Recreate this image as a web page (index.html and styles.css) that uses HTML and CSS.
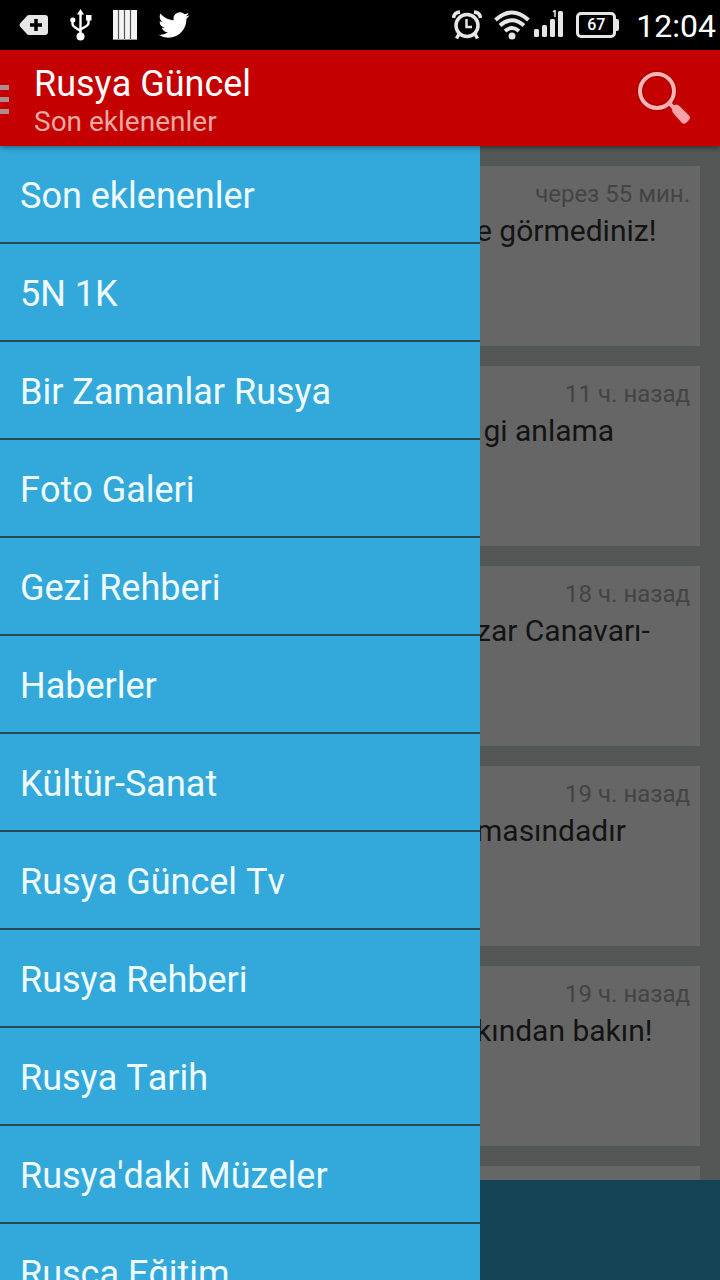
FILE: index.html
```html
<!DOCTYPE html>
<html lang="tr">
<head>
    <meta charset="UTF-8">
    <meta name="viewport" content="width=device-width, initial-scale=1.0">
    <title>Rusya Güncel</title>
    <link rel="stylesheet" href="styles.css">
</head>
<body>
    <div class="status-bar">
        <div class="status-left">
            <svg width="30" height="22" viewBox="0 0 30 22">
                <path d="M10 1h16q3 0 3 3v14q0 3-3 3H10q-2 0-3-2L1 12.500q-1-1.500 0-3L7 3q1-2 3-2z" fill="#e6e6e6"/>
                <path d="M17 5v12M11 11h12" stroke="#000" stroke-width="3.500"/>
            </svg>
            <svg width="22" height="32" viewBox="0 0 22 32">
                <path d="M10.500 5v22M2.500 11v4q0 2 2 3l6 4M18.500 10v4q0 2-2 3l-6 3.500" fill="none" stroke="#fff" stroke-width="2.400"/>
                <path d="M10.500 0l3.500 5.500H7z" fill="#fff"/>
                <circle cx="2.800" cy="11" r="2.600" fill="#fff"/>
                <path d="M16 6h5.500v5.500H16z" fill="#fff"/>
                <circle cx="10.500" cy="27.500" r="4" fill="#fff"/>
            </svg>
            <svg width="24" height="30" viewBox="0 0 24 30">
                <path d="M0 0h24v30H0z" fill="#f4f4f4"/>
                <path d="M5.500 0v30M11.500 0v30M17.500 0v30" stroke="#555" stroke-width="1.200"/>
                <path d="M0 29.500h24" stroke="#999"/>
            </svg>
            <svg width="32" height="26" viewBox="0 2 24 20">
                <path fill="#fff" d="M23.950 4.570a10 10 0 0 1-2.820.780 4.960 4.960 0 0 0 2.160-2.720c-.950.550-2 .950-3.130 1.180a4.920 4.920 0 0 0-8.380 4.480C7.690 8.100 4.070 6.130 1.640 3.160a4.820 4.820 0 0 0-.660 2.480c0 1.710.870 3.210 2.190 4.100a4.900 4.900 0 0 1-2.230-.620v.060a4.920 4.920 0 0 0 3.950 4.830 5 5 0 0 1-2.210.080 4.940 4.940 0 0 0 4.600 3.420A9.870 9.870 0 0 1 0 19.540a14 14 0 0 0 7.550 2.210c9.050 0 14-7.500 14-13.980 0-.210 0-.420-.020-.630a9.940 9.940 0 0 0 2.460-2.550z"/>
            </svg>
        </div>
        <div class="status-right">
            <svg width="30" height="30" viewBox="0 0 30 30" fill="none" stroke="#e6e6e6">
                <circle cx="15" cy="15.500" r="11" stroke-width="3.500"/>
                <path d="M14.500 9v8h5.500" stroke-width="2.500"/>
                <path d="M1.500 8Q2 2.500 8 2M28.500 8Q28 2.500 22 2" stroke-width="3.500"/>
                <path d="M7 24l-2.500 4.500M23 24l2.500 4.500" stroke-width="3.500"/>
            </svg>
            <svg class="wifi" width="36" height="30" viewBox="0 0 36 30" fill="none" stroke="#e6e6e6" stroke-width="4">
                <path d="M1.500 10Q18-5 34.500 10M6 15.500Q18 5 30 15.500M11 21Q18 15 25 21"/>
                <circle cx="18" cy="26" r="3.500" fill="#e6e6e6" stroke="none"/>
            </svg>
            <svg width="30" height="30" viewBox="0 0 30 30" fill="#e6e6e6">
                <rect x="0" y="19" width="5" height="8" rx="1.500"/>
                <rect x="8" y="15" width="5" height="12" rx="1.500"/>
                <rect x="16" y="9" width="5" height="18" rx="1.500"/>
                <rect x="24" y="1" width="5" height="26" rx="1.500"/>
                <path d="M19 2l2-1.500V7" fill="none" stroke="#e6e6e6" stroke-width="1.500"/>
            </svg>
            <div class="battery">67</div>
            <div class="clock">12:04</div>
        </div>
    </div>

    <header class="action-bar">
        <button type="button" class="menu-button" aria-label="Menü"><span></span><span></span><span></span></button>
        <div class="titles">
            <h1>Rusya Güncel</h1>
            <p>Son eklenenler</p>
        </div>
        <button type="button" class="search-button" aria-label="Ara">
            <svg width="56" height="56" viewBox="0 0 56 56">
                <g fill="none" stroke="#8f0000" stroke-opacity=".5">
                    <circle cx="21" cy="21" r="17" stroke-width="7"/>
                    <path d="M33 33l7 7" stroke-width="6"/>
                </g>
                <circle cx="21" cy="21" r="17" fill="none" stroke="#ffb3b3" stroke-width="4"/>
                <path d="M32.500 32.500l5 5" stroke="#f7a3a8" stroke-width="4"/>
                <path d="M36 39q-1-2 1-3l3-1.500q2 0 4 2l9 9q2 2 0 4.500l-3 3q-2 1.500-4 0l-8-9q-2-2-2-5z" fill="#f7a3a8"/>
            </svg>
        </button>
    </header>

    <main class="content">
        <nav class="drawer">
            <a href="#">Son eklenenler</a>
            <a href="#">5N 1K</a>
            <a href="#">Bir Zamanlar Rusya</a>
            <a href="#">Foto Galeri</a>
            <a href="#">Gezi Rehberi</a>
            <a href="#">Haberler</a>
            <a href="#">Kültür-Sanat</a>
            <a href="#">Rusya Güncel Tv</a>
            <a href="#">Rusya Rehberi</a>
            <a href="#">Rusya Tarih</a>
            <a href="#">Rusya'daki Müzeler</a>
            <a href="#">Rusça Eğitim</a>
        </nav>
        <section class="feed">
            <div class="cards">
                <article class="card">
                    <time>через 55 мин.</time>
                    <h2>e görmediniz!</h2>
                </article>
                <article class="card">
                    <time>11 ч. назад</time>
                    <h2>&nbsp;gi anlama</h2>
                </article>
                <article class="card">
                    <time>18 ч. назад</time>
                    <h2>zar Canavarı-</h2>
                </article>
                <article class="card">
                    <time>19 ч. назад</time>
                    <h2>masındadır</h2>
                </article>
                <article class="card">
                    <time>19 ч. назад</time>
                    <h2>kından bakın!</h2>
                </article>
                <article class="card"></article>
            </div>
            <div class="ad-bar"></div>
        </section>
    </main>
</body>
</html>
```
FILE: styles.css
```css
* {
    box-sizing: border-box;
}

body {
    margin: 0;
    height: 100vh;
    display: flex;
    flex-direction: column;
    overflow: hidden;
    background: #000;
    font-family: Roboto, sans-serif;
}

h1, h2, p {
    margin: 0;
    font-weight: 400;
}

button {
    border: none;
    padding: 0;
    background: none;
    cursor: pointer;
}

svg {
    display: block;
    flex: none;
}

/* status bar */
.status-bar {
    flex: none;
    height: 50px;
    padding: 0 4px 0 19px;
    display: flex;
    justify-content: space-between;
    align-items: center;
    background: #000;
    color: #fff;
}

.status-left, .status-right {
    display: flex;
    align-items: center;
}

.status-left {
    gap: 21px;
}

.status-right {
    gap: 12px;
}

.wifi {
    margin-right: -8px;
}

.battery {
    position: relative;
    width: 40px;
    height: 26px;
    border: 3px solid #e6e6e6;
    border-radius: 5px;
    font-size: 16px;
    font-weight: 500;
    line-height: 20px;
    text-align: center;
}

.battery::after {
    content: "";
    position: absolute;
    top: 4px;
    right: -6px;
    width: 3px;
    height: 12px;
    border-radius: 0 2px 2px 0;
    background: #e6e6e6;
}

.clock {
    margin-left: 8px;
    padding-top: 2px;
    font-size: 32px;
}

/* action bar */
.action-bar {
    position: relative;
    z-index: 3;
    flex: none;
    height: 96px;
    padding-right: 28px;
    display: flex;
    align-items: center;
    background: #c40000;
    box-shadow: 0 1px 6px rgba(0, 0, 0, 0.5);
}

.menu-button {
    width: 34px;
    padding-top: 2px;
    display: flex;
    flex-direction: column;
    gap: 7px;
}

.menu-button span {
    width: 9px;
    height: 5px;
    background: #b08c8c;
}

.titles {
    flex: 1;
    padding-top: 6px;
}

.titles h1 {
    color: #fff;
    font-size: 36px;
    line-height: 42px;
}

.titles p {
    color: #eda8a0;
    font-size: 28px;
    line-height: 34px;
}

.titles, .drawer {
    font-kerning: none;
}

/* drawer and feed */
.content {
    flex: 1;
    min-height: 0;
    display: grid;
    grid-template-columns: 2fr 1fr;
    overflow: hidden;
}

.drawer {
    z-index: 2;
    min-height: 0;
    background: #33a9db;
}

.drawer a {
    display: block;
    height: 98px;
    padding-left: 20px;
    border-bottom: 2px solid #264a55;
    color: #effbff;
    font-size: 36px;
    line-height: 100px;
    text-decoration: none;
}

.feed {
    min-width: 0;
    min-height: 0;
    margin-left: -4px;
    display: flex;
    flex-direction: column;
    background: #535756;
}

.cards {
    flex: 1;
    min-height: 0;
    padding: 20px 20px 0 0;
    display: flex;
    flex-direction: column;
    gap: 20px;
    overflow: hidden;
}

.card {
    flex: none;
    height: 180px;
    padding: 12px 10px;
    background: #666;
}

.card time {
    display: block;
    color: #444;
    font-size: 24px;
    line-height: 32px;
    text-align: right;
}

.card h2 {
    color: #141414;
    font-size: 30px;
    line-height: 42px;
    margin-left: -10px;
    white-space: nowrap;
}

.ad-bar {
    flex: none;
    height: 100px;
    background: #144454;
}
```
